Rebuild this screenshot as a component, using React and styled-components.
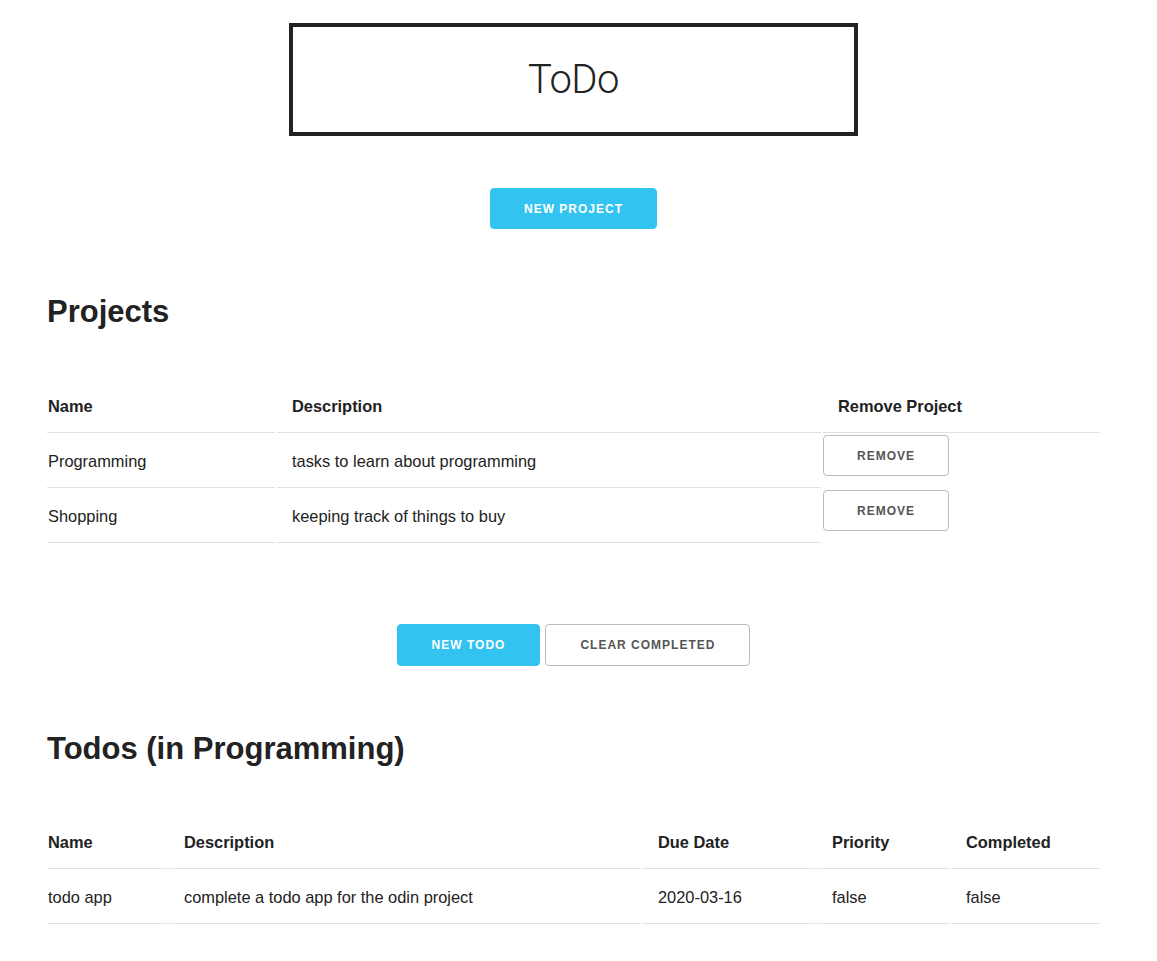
import React from 'react';
import styled, {createGlobalStyle} from 'styled-components';

const GlobalStyle = createGlobalStyle`
  body {
    margin: 0;
    background: #fff;
    color: #222;
    font-family: "Liberation Sans", Arial, sans-serif;
    font-size: 16.4px;
  }
`;

const Page = styled.div`
  width: 1057px;
  margin-left: 45px;
  padding-top: 23px;
  display: flex;
  flex-direction: column;
`;

const TitleBox = styled.div`
  align-self: center;
  width: 569px;
  height: 113px;
  box-sizing: border-box;
  border: 4px solid #222;
  display: flex;
  align-items: center;
  justify-content: center;
`;

const Title = styled.h1`
  margin: 0;
  font-family: Roboto, "Liberation Sans", sans-serif;
  font-weight: 300;
  font-size: 40px;
  letter-spacing: -0.5px;
  color: #222;
`;

const ButtonRow = styled.div`
  display: flex;
  justify-content: center;
  gap: 5px;
  margin-top: ${p => p.$top}px;
`;

const Button = styled.button`
  height: ${p => (p.$small ? 41 : 42)}px;
  padding: 0 ${p => (p.$small ? 33 : 34)}px;
  box-sizing: border-box;
  border-radius: 4px;
  border: 1px solid ${p => (p.$primary ? '#33C3F0' : '#bbb')};
  background: ${p => (p.$primary ? '#33C3F0' : 'transparent')};
  color: ${p => (p.$primary ? '#fff' : '#555')};
  font-family: "Liberation Sans", Arial, sans-serif;
  font-size: 12px;
  font-weight: 700;
  letter-spacing: 1px;
  text-transform: uppercase;
  cursor: pointer;
  white-space: nowrap;
`;

const Heading = styled.h2`
  margin: ${p => p.$top}px 0 0 2px;
  font-size: 31px;
  line-height: 39px;
  font-weight: 700;
  color: #222;
`;

const Table = styled.table`
  margin-top: ${p => p.$top}px;
  width: 100%;
  border-collapse: separate;
  border-spacing: 2px;
  table-layout: fixed;
`;

const Th = styled.th`
  box-sizing: border-box;
  width: ${p => (p.$w ? `${p.$w}px` : 'auto')};
  text-align: left;
  font-weight: 700;
  line-height: 24px;
  padding: 10px 15px 14px;
  border-bottom: 1px solid #e1e1e1;
  &:first-child { padding-left: 1px; }
`;

const Td = styled.td`
  line-height: 24px;
  padding: 14px 15px;
  border-bottom: 1px solid #e1e1e1;
  vertical-align: middle;
  &:first-child { padding-left: 1px; }
`;

const ActionCell = styled.td`
  padding: 0;
  vertical-align: top;
`;

const projects = [
  {name: 'Programming', description: 'tasks to learn about programming'},
  {name: 'Shopping', description: 'keeping track of things to buy'},
];

const todos = [
  {name: 'todo app', description: 'complete a todo app for the odin project', due: '2020-03-16', priority: 'false', completed: 'false'},
];

export default function App() {
  return (
    <>
      <GlobalStyle/>
      <Page>
        <TitleBox>
          <Title>ToDo</Title>
        </TitleBox>

        <ButtonRow $top={52}>
          <Button $primary $small>New Project</Button>
        </ButtonRow>

        <Heading $top={63}>Projects</Heading>
        <Table $top={51}>
          <thead>
            <tr>
              <Th $w={228}>Name</Th>
              <Th $w={544}>Description</Th>
              <Th>Remove Project</Th>
            </tr>
          </thead>
          <tbody>
            {projects.map(project => (
              <tr key={project.name}>
                <Td>{project.name}</Td>
                <Td>{project.description}</Td>
                <ActionCell>
                  <Button $small>Remove</Button>
                </ActionCell>
              </tr>
            ))}
          </tbody>
        </Table>

        <ButtonRow $top={79}>
          <Button $primary>New Todo</Button>
          <Button>Clear Completed</Button>
        </ButtonRow>

        <Heading $top={63}>Todos (in Programming)</Heading>
        <Table $top={50}>
          <thead>
            <tr>
              <Th $w={120}>Name</Th>
              <Th $w={472}>Description</Th>
              <Th $w={172}>Due Date</Th>
              <Th $w={132}>Priority</Th>
              <Th>Completed</Th>
            </tr>
          </thead>
          <tbody>
            {todos.map(todo => (
              <tr key={todo.name}>
                <Td>{todo.name}</Td>
                <Td>{todo.description}</Td>
                <Td>{todo.due}</Td>
                <Td>{todo.priority}</Td>
                <Td>{todo.completed}</Td>
              </tr>
            ))}
          </tbody>
        </Table>
      </Page>
    </>
  );
}
